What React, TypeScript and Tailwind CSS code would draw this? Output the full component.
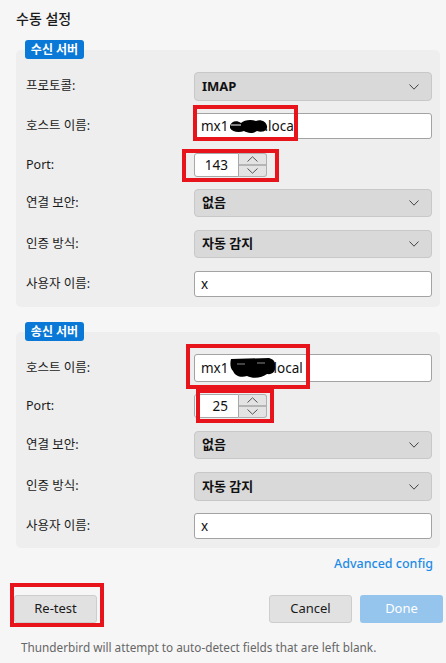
import React from "react";

const Chevron = ({ up = false, w = 10, h = 6, color = "#444" }: { up?: boolean; w?: number; h?: number; color?: string }) => (
  <svg width={w} height={h} viewBox={`0 0 ${w} ${h}`} fill="none">
    {up ? (
      <path d={`M0.5 ${h - 0.5} L${w / 2} 0.8 L${w - 0.5} ${h - 0.5}`} stroke={color} strokeWidth="1" />
    ) : (
      <path d={`M0.5 0.5 L${w / 2} ${h - 0.8} L${w - 0.5} 0.5`} stroke={color} strokeWidth="1" />
    )}
  </svg>
);

const Label = ({ children }: { children: React.ReactNode }) => (
  <div className="w-[168px] shrink-0 text-[12.5px] text-[#1a1a1a]">{children}</div>
);

const Select = ({ value, h }: { value: string; h: string }) => (
  <div
    className={`flex w-[238px] items-center justify-between rounded-[4px] border border-[#c8c8c8] bg-[#d9d9d9] pl-[7px] pr-[12px] text-[13px] font-bold text-[#111] ${h}`}
  >
    <span>{value}</span>
    <Chevron />
  </div>
);

const TextInput = ({ children, h }: { children: React.ReactNode; h: string }) => (
  <div
    className={`flex w-[238px] items-center rounded-[3px] border border-[#a3a3a3] bg-white pl-[6px] text-[13.5px] text-[#111] ${h}`}
  >
    {children}
  </div>
);

const Spinner = ({ value }: { value: string }) => (
  <div className="flex h-[24px] w-[73px]">
    <div className="flex w-[45px] items-center justify-end rounded-l-[3px] border border-[#a8a8a8] bg-white pr-[10px] text-[13.5px] text-[#111]">
      {value}
    </div>
    <div className="flex w-[28px] flex-col rounded-r-[3px] border border-l-0 border-[#b0b0b0] bg-[#e3e3e3]">
      <div className="flex flex-1 items-center justify-center border-b-2 border-[#b5b5b5]">
        <Chevron up w={11} h={6} color="#555" />
      </div>
      <div className="flex flex-1 items-center justify-center">
        <Chevron w={11} h={6} color="#555" />
      </div>
    </div>
  </div>
);

const Blob1 = () => (
  <svg width="40" height="16" viewBox="0 0 40 16" className="-mr-[4px]">
    <path
      d="M1 8 C2 3 8 2 12 5 C15 2 22 1 27 3 C31 1 37 3 38 8 C39 13 33 15 28 13 C24 16 18 15 15 13 C10 15 3 14 1 10 Z"
      fill="#000"
    />
    <path d="M2 7 L12 7" stroke="#fff" strokeWidth="1" />
  </svg>
);

const Blob2 = () => (
  <svg width="48" height="22" viewBox="0 0 48 22" className="-mr-[3px]">
    <path
      d="M2 2 L40 1 C44 2 47 5 46 9 C47 14 44 18 38 17 C33 21 24 22 18 19 C12 21 6 19 4 14 C1 11 1 6 2 2 Z"
      fill="#000"
    />
    <path d="M8 7 L16 7 M28 6 L36 6" stroke="#888" strokeWidth="1" />
  </svg>
);

const RedBox = ({ cls }: { cls: string }) => (
  <div className={`pointer-events-none absolute border-[4px] border-[#e8141c] ${cls}`} />
);

export default function App() {
  return (
    <div className="relative flex h-[663px] w-[446px] flex-col overflow-hidden bg-[#f6f6f6] font-['Noto_Sans','Noto_Sans_CJK_KR',sans-serif] text-[#1a1a1a]">
      <div className="ml-[16px] h-[40px] pt-[9px] text-[14px] font-medium leading-[20px] text-[#1a1a1a]">수동 설정</div>

      {/* Incoming */}
      <div className="ml-[16px] mr-[6px] flex flex-col">
        <div className="relative z-10 -mb-[9px] ml-[9px] h-[19px] w-[59px] rounded-[3px] bg-[#0a78d6] text-center text-[12px] font-bold leading-[19px] text-white">
          수신 서버
        </div>
        <div className="flex flex-col rounded-[5px] bg-[#eeeeee] pb-[10px] pl-[10px] pr-[8px] pt-[22px]">
          <div className="flex items-center">
            <Label>프로토콜:</Label>
            <Select value="IMAP" h="h-[29px]" />
          </div>
          <div className="mt-[12px] flex items-center">
            <Label>호스트 이름:</Label>
            <TextInput h="h-[26px]">
              <span>mx1</span>
              <Blob1 />
              <span>.loca</span>
            </TextInput>
          </div>
          <div className="mt-[14px] flex items-center">
            <Label>Port:</Label>
            <Spinner value="143" />
          </div>
          <div className="mt-[12px] flex items-center">
            <Label>연결 보안:</Label>
            <Select value="없음" h="h-[28px]" />
          </div>
          <div className="mt-[13px] flex items-center">
            <Label>인증 방식:</Label>
            <Select value="자동 감지" h="h-[28px]" />
          </div>
          <div className="mt-[13px] flex items-center">
            <Label>사용자 이름:</Label>
            <TextInput h="h-[26px]">x</TextInput>
          </div>
        </div>
      </div>

      {/* Outgoing */}
      <div className="ml-[16px] mr-[6px] mt-[15px] flex flex-col">
        <div className="relative z-10 -mb-[9px] ml-[9px] h-[19px] w-[59px] rounded-[3px] bg-[#0a78d6] text-center text-[12px] font-bold leading-[19px] text-white">
          송신 서버
        </div>
        <div className="flex flex-col rounded-[5px] bg-[#eeeeee] pb-[9px] pl-[10px] pr-[8px] pt-[22px]">
          <div className="flex items-center">
            <Label>호스트 이름:</Label>
            <TextInput h="h-[28px]">
              <span>mx1</span>
              <Blob2 />
              <span>local</span>
            </TextInput>
          </div>
          <div className="mt-[12px] flex items-center">
            <Label>Port:</Label>
            <Spinner value="25" />
          </div>
          <div className="mt-[13px] flex items-center">
            <Label>연결 보안:</Label>
            <Select value="없음" h="h-[28px]" />
          </div>
          <div className="mt-[13px] flex items-center">
            <Label>인증 방식:</Label>
            <Select value="자동 감지" h="h-[29px]" />
          </div>
          <div className="mt-[12px] flex items-center">
            <Label>사용자 이름:</Label>
            <TextInput h="h-[26px]">x</TextInput>
          </div>
        </div>
      </div>

      <div className="mr-[13px] mt-[7px] text-right text-[12.5px] font-medium leading-[18px] text-[#1e8ce6]">Advanced config</div>

      <div className="ml-[14px] mr-[3px] mt-[22px] flex items-center">
        <button className="h-[28px] w-[83px] rounded-[3px] border border-[#cdcdcd] bg-[#e1e1e1] text-[13px] text-[#1a1a1a]">
          Re-test
        </button>
        <div className="flex-1" />
        <button className="h-[28px] w-[83px] rounded-[3px] border border-[#cdcdcd] bg-[#e1e1e1] text-[13px] text-[#1a1a1a]">
          Cancel
        </button>
        <button className="ml-[8px] h-[28px] w-[83px] rounded-[3px] bg-[#95c5ec] text-[13px] text-white">
          Done
        </button>
      </div>

      <div className="ml-[21px] mt-[16px] text-[11.75px] leading-[16px] text-[#666]">
        Thunderbird will attempt to auto-detect fields that are left blank.
      </div>

      <RedBox cls="left-[193px] top-[105px] h-[36px] w-[105px]" />
      <RedBox cls="left-[182px] top-[149px] h-[33px] w-[97px]" />
      <RedBox cls="left-[186px] top-[344px] h-[45px] w-[124px]" />
      <RedBox cls="left-[196px] top-[389px] h-[34px] w-[78px]" />
      <RedBox cls="left-[10px] top-[583px] h-[44px] w-[94px]" />
    </div>
  );
}
